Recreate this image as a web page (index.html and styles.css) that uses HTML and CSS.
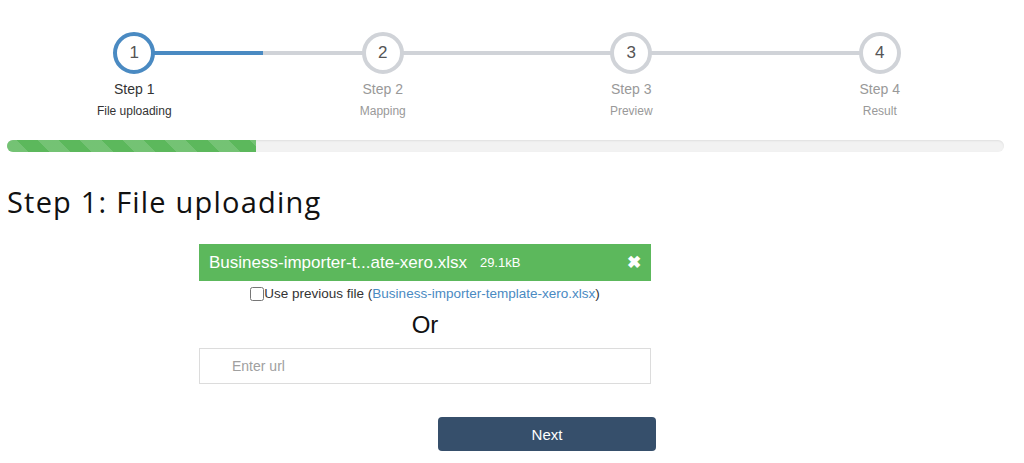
FILE: index.html
```html
<!DOCTYPE html>
<html lang="en">
<head>
    <meta charset="UTF-8">
    <meta name="viewport" content="width=device-width, initial-scale=1.0">
    <title>Import wizard</title>
    <link rel="stylesheet" href="styles.css">
</head>
<body>
    <div class="wizard">
        <div class="steps">
            <div class="step active">
                <div class="circle">1</div>
                <div class="step-title">Step 1</div>
                <div class="step-name">File uploading</div>
            </div>
            <div class="step">
                <div class="circle">2</div>
                <div class="step-title">Step 2</div>
                <div class="step-name">Mapping</div>
            </div>
            <div class="step">
                <div class="circle">3</div>
                <div class="step-title">Step 3</div>
                <div class="step-name">Preview</div>
            </div>
            <div class="step">
                <div class="circle">4</div>
                <div class="step-title">Step 4</div>
                <div class="step-name">Result</div>
            </div>
        </div>

        <div class="progress">
            <div class="progress-bar" style="width: 25%"></div>
        </div>

        <h1>Step 1: File uploading</h1>

        <div class="upload">
            <div class="file-bar">
                <span class="file-name">Business-importer-t...ate-xero.xlsx</span>
                <span class="file-size">29.1kB</span>
                <span class="file-remove">&#10006;</span>
            </div>
            <label class="previous">
                <input type="checkbox">Use previous file (<a href="#">Business-importer-template-xero.xlsx</a>)
            </label>
            <div class="or">Or</div>
            <input class="url-input" type="text" placeholder="Enter url">
        </div>

        <div class="actions">
            <button class="next-btn">Next</button>
        </div>
    </div>
</body>
</html>
```

FILE: styles.css
```css
body {
    margin: 0;
    font-family: "Liberation Sans", Arial, sans-serif;
    background-color: #fff;
    color: #333;
}
.wizard {
    width: 997px;
    margin-left: 7px;
    padding-top: 32px;
}
.steps {
    display: grid;
    grid-template-columns: repeat(4, 1fr);
    padding-left: 3px;
}
.step {
    position: relative;
    display: flex;
    flex-direction: column;
    align-items: center;
    color: #999;
}
.step::after {
    content: "";
    position: absolute;
    top: 19px;
    left: 50%;
    width: 100%;
    height: 4px;
    background-color: #d0d3d8;
    z-index: 0;
}
.step:last-child::after {
    display: none;
}
.step.active::after {
    background: linear-gradient(to right, #4a8ac2 52%, #d0d3d8 52%);
}
.circle {
    position: relative;
    z-index: 1;
    width: 34px;
    height: 34px;
    border: 4px solid #d0d3d8;
    border-radius: 50%;
    background-color: #fff;
    display: flex;
    align-items: center;
    justify-content: center;
    font-size: 17px;
    color: #555;
}
.step.active .circle {
    border-color: #4a8ac2;
}
.step-title {
    margin-top: 5px;
    font-size: 14px;
    line-height: 20px;
}
.step-name {
    margin-top: 3px;
    font-size: 12px;
    line-height: 18px;
}
.step.active .step-title,
.step.active .step-name {
    color: #333;
}
.progress {
    margin-top: 20px;
    height: 12px;
    border-radius: 6px;
    background-color: #f2f2f2;
    box-shadow: inset 0 1px 2px rgba(0, 0, 0, 0.08);
    overflow: hidden;
}
.progress-bar {
    height: 100%;
    background-color: #5cb85c;
    background-image: repeating-linear-gradient(45deg, rgba(255, 255, 255, 0.15) 0 15px, transparent 15px 30px);
}
h1 {
    margin: 30px 0 0;
    font-family: "Open Sans", Lato, sans-serif;
    font-weight: 400;
    font-size: 29px;
    line-height: 40px;
    letter-spacing: 1.2px;
    color: #111;
}
.upload {
    width: 452px;
    margin: 22px 0 0 192px;
    display: flex;
    flex-direction: column;
    align-items: center;
}
.file-bar {
    align-self: stretch;
    height: 37px;
    background-color: #5cb85c;
    color: #fff;
    display: flex;
    align-items: center;
    padding: 0 10px 0 10px;
}
.file-name {
    font-size: 17px;
}
.file-size {
    margin-left: 13px;
    font-size: 13px;
}
.file-remove {
    margin-left: auto;
    font-size: 17px;
    font-weight: bold;
}
.previous {
    margin-top: 4px;
    font-size: 13.5px;
    line-height: 18px;
    color: #333;
    display: flex;
    align-items: center;
}
.previous input {
    margin: 0;
    width: 14px;
    height: 14px;
}
.previous a {
    color: #4a8ac2;
    text-decoration: none;
}
.or {
    margin-top: 8px;
    font-size: 24px;
    line-height: 28px;
    color: #111;
}
.url-input {
    align-self: stretch;
    margin-top: 9px;
    height: 36px;
    box-sizing: border-box;
    border: 1px solid #dcdcdc;
    padding: 0 0 0 32px;
    font-family: inherit;
    font-size: 14px;
    color: #333;
    outline: none;
}
.url-input::placeholder {
    color: #a0a0a0;
}
.actions {
    margin: 33px 0 0 431px;
}
.next-btn {
    width: 218px;
    height: 34px;
    border: none;
    border-radius: 4px;
    background-color: #364f6b;
    color: #fff;
    font-family: inherit;
    font-size: 15px;
    cursor: pointer;
}
```
